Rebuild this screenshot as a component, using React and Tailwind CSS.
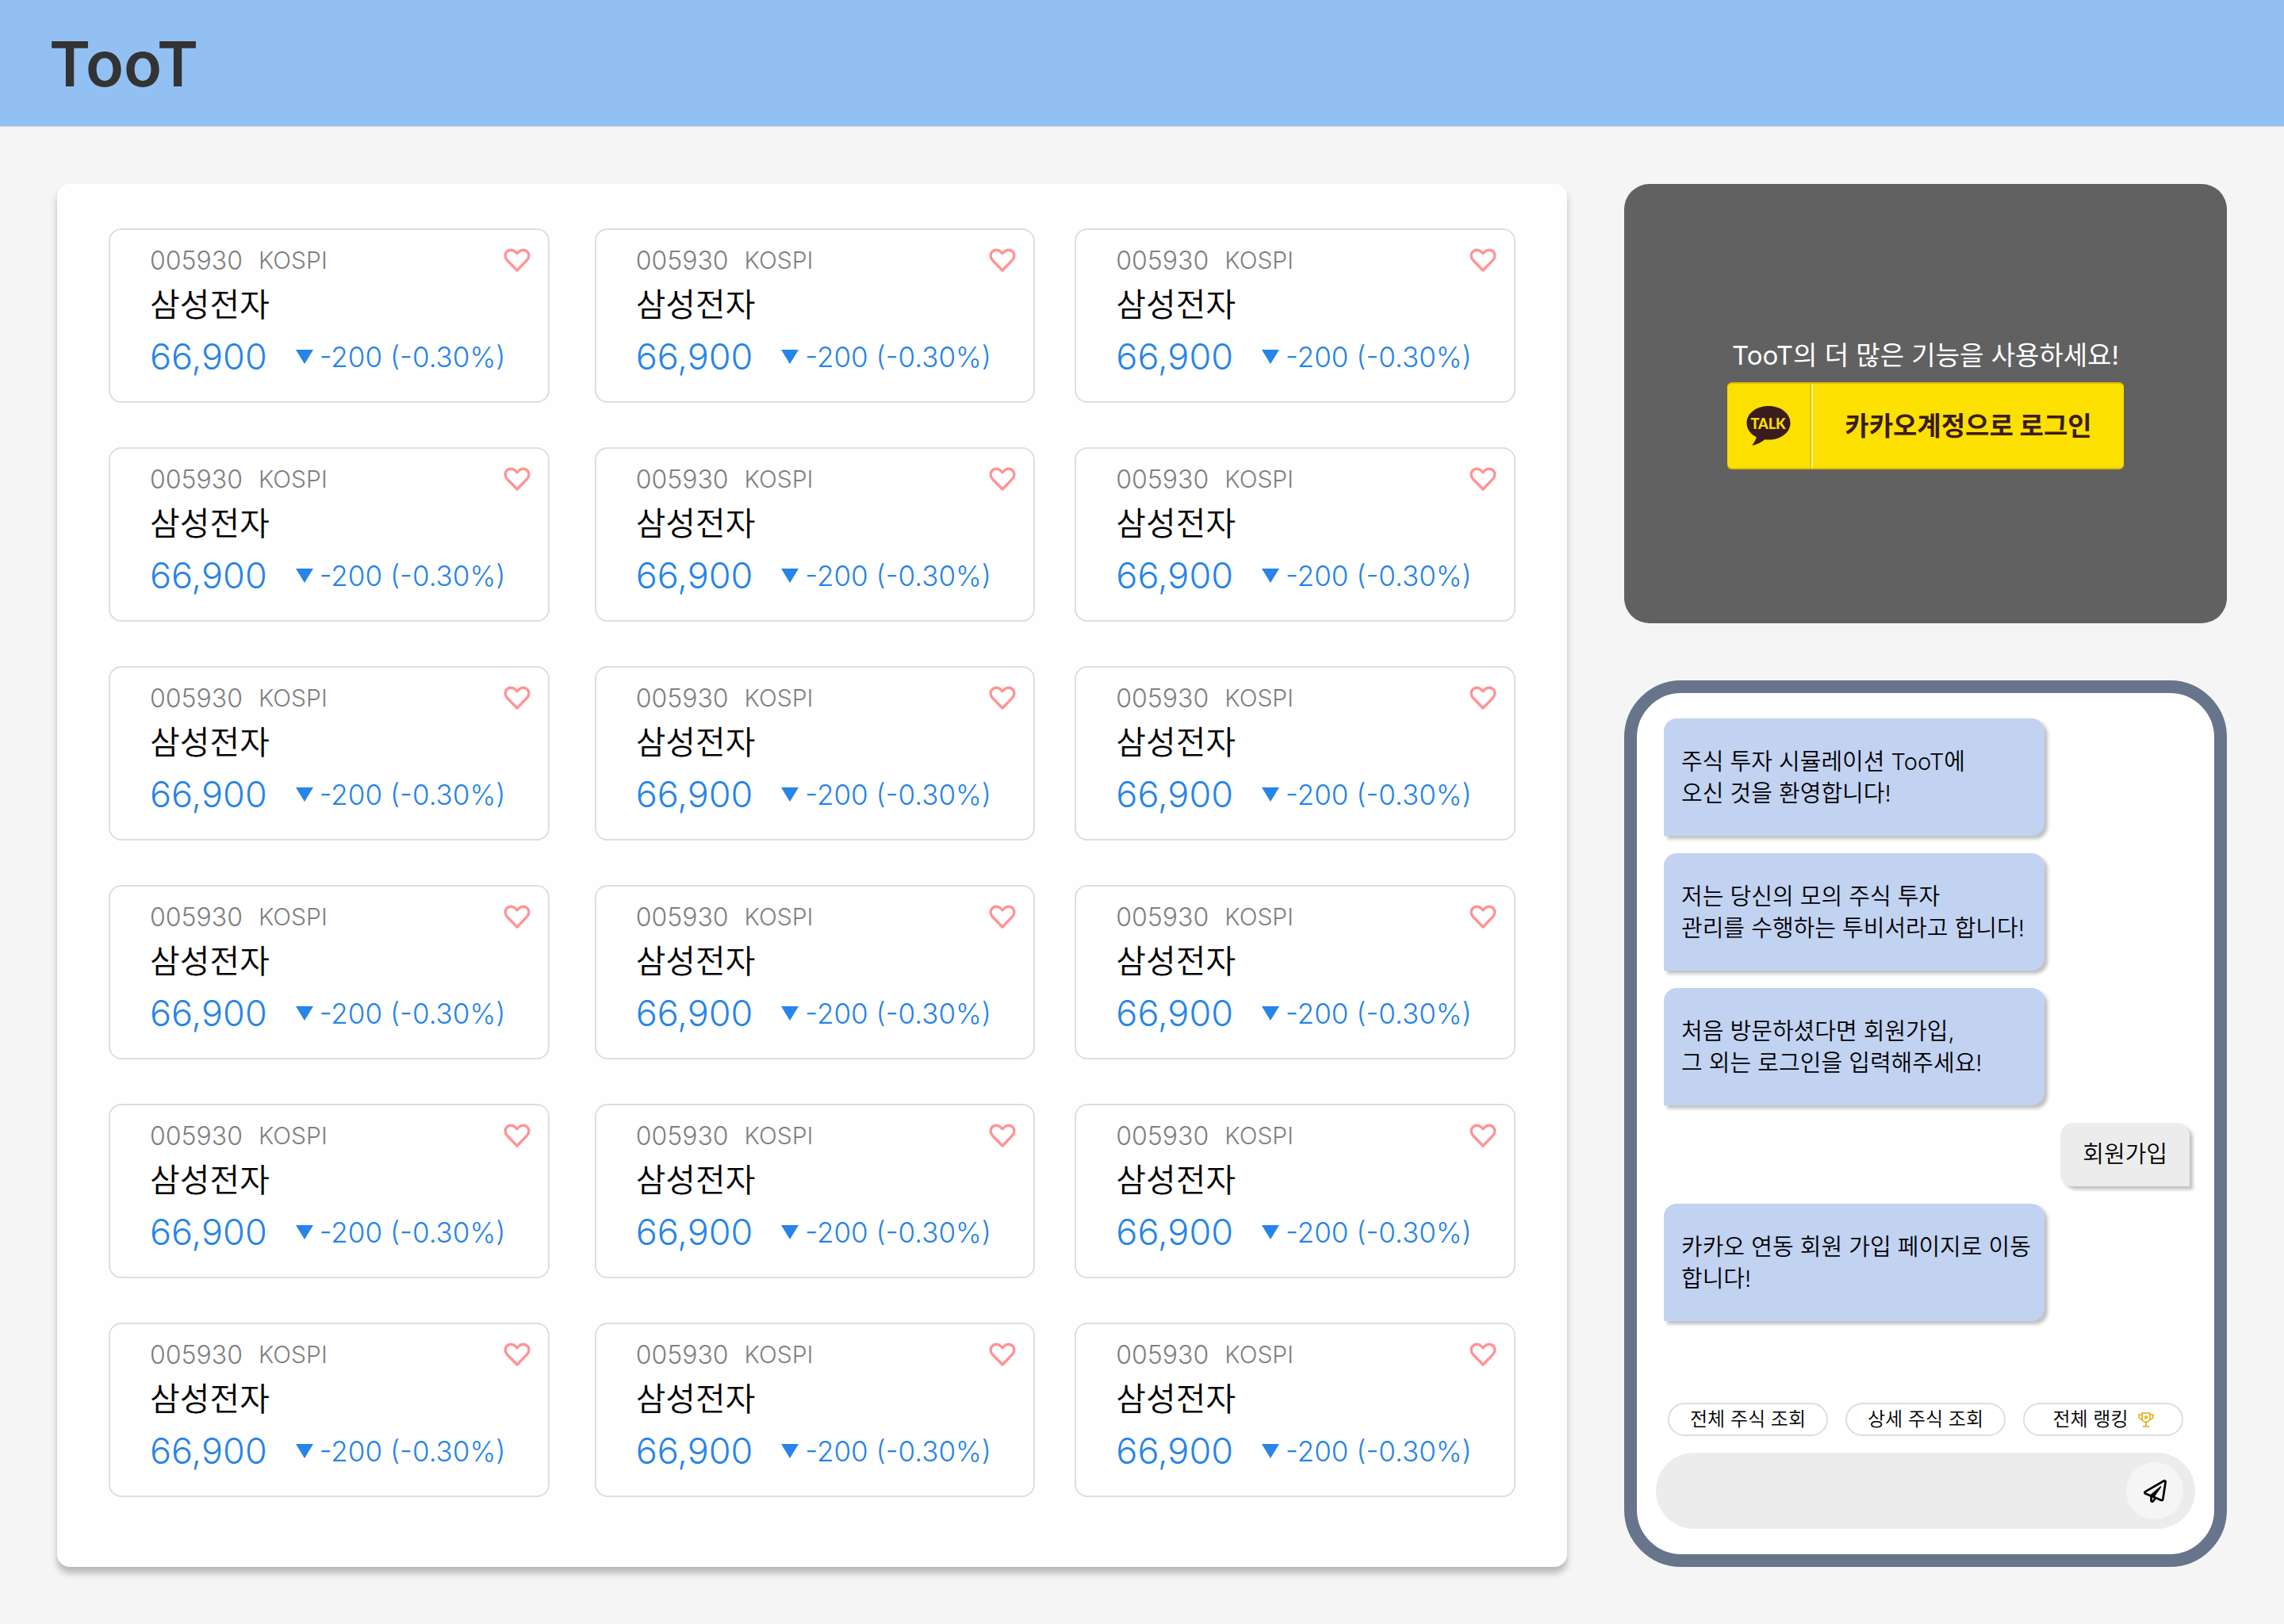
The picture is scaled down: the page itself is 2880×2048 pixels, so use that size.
import React from "react";
import { FaRegPaperPlane } from "react-icons/fa";

const stocks = Array.from({ length: 18 }, (_, i) => ({
  id: i,
  code: "005930",
  market: "KOSPI",
  name: "삼성전자",
  price: "66,900",
  change: "-200 (-0.30%)",
}));

const messages = [
  { from: "bot", lines: ["주식 투자 시뮬레이션 TooT에", "오신 것을 환영합니다!"] },
  { from: "bot", lines: ["저는 당신의 모의 주식 투자", "관리를 수행하는 투비서라고 합니다!"] },
  { from: "bot", lines: ["처음 방문하셨다면 회원가입,", "그 외는 로그인을 입력해주세요!"] },
  { from: "user", lines: ["회원가입"] },
  { from: "bot", lines: ["카카오 연동 회원 가입 페이지로 이동", "합니다!"] },
];

function Heart() {
  return (
    <svg viewBox="0 0 34 30" className="h-[30px] w-[34px]" fill="none" stroke="#ff9494" strokeWidth="3.4" strokeLinejoin="round" aria-hidden="true">
      <path d="M17 28 L4.6 15.2 C1.6 12 1.2 7 4.2 4.2 C7.2 1.4 11.8 1.6 14.6 4.4 L17 6.8 L19.4 4.4 C22.2 1.6 26.8 1.4 29.8 4.2 C32.8 7 32.4 12 29.4 15.2 Z" />
    </svg>
  );
}

function Trophy() {
  return (
    <svg viewBox="0 0 20 19" className="h-[19px] w-5" fill="none" stroke="#e9ae22" strokeWidth="1.7" aria-hidden="true">
      <path d="M5 1 H15 V7 C15 10 12.8 12.4 10 12.4 C7.2 12.4 5 10 5 7 Z" />
      <path d="M5 3 H1 V4.8 C1 7.8 3 9.2 6 9.6 M15 3 H19 V4.8 C19 7.8 17 9.2 14 9.6" />
      <path d="M10 12.4 V17.6 M5.8 17.8 H14.2" />
      <path d="M10 3 L11 5.2 L13.2 5.4 L11.5 6.9 L12 9.1 L10 8 L8 9.1 L8.5 6.9 L6.8 5.4 L9 5.2 Z" fill="#e9ae22" stroke="none" />
    </svg>
  );
}

function TalkLogo() {
  return (
    <svg viewBox="0 0 56 50" className="h-[50px] w-14" aria-hidden="true">
      <path d="M28 0 C12.6 0 0.5 9.4 0.5 21.4 C0.5 29 5.4 35.4 12.8 39.2 C12 42.6 9.8 46.6 7.2 49.6 C13.2 48.8 19.4 45.6 23.2 42.2 C24.8 42.5 26.4 42.6 28 42.6 C43.4 42.6 55.5 33.2 55.5 21.4 C55.5 9.4 43.4 0 28 0 Z" fill="#3b1c1e" />
      <text x="27.5" y="28.5" textAnchor="middle" fontFamily="Lato, sans-serif" fontWeight="900" fontSize="18" fill="#fbe000">TALK</text>
    </svg>
  );
}

function StockCard({ stock }) {
  return (
    <article className="relative w-full rounded-2xl border-2 border-[#dedede] bg-white px-[50px] pt-[14px] pb-5">
      <div className="flex items-start gap-5 text-[#808080] font-light">
        <span className="text-[32px] leading-[50px]">{stock.code}</span>
        <span className="text-[30px] leading-[48px]">{stock.market}</span>
      </div>
      <button type="button" aria-label="관심 종목" className="absolute top-[23px] right-[22px]">
        <Heart />
      </button>
      <h2 className="text-[41px] leading-[60px] font-[350] text-black">{stock.name}</h2>
      <div className="flex items-center text-[#2784e8] font-light">
        <span className="text-[45px] leading-[72px]">{stock.price}</span>
        <svg viewBox="0 0 22 18" className="ml-9 h-[18px] w-[22px]" aria-hidden="true">
          <path d="M0 0 H22 L11 18 Z" fill="#2784e8" />
        </svg>
        <span className="ml-2 text-[35px] leading-[72px] whitespace-nowrap">{stock.change}</span>
      </div>
    </article>
  );
}

function Message({ message }) {
  const text = message.lines.map((line) => (
    <span key={line} className="block whitespace-nowrap">{line}</span>
  ));
  if (message.from === "user") {
    return (
      <li className="self-end rounded-[16px] rounded-br-none bg-[#ececec] px-7 py-5 text-[29px] leading-[40px] font-[350] shadow-[4px_4px_4px_rgba(0,0,0,0.25)]">
        {text}
      </li>
    );
  }
  return (
    <li className="w-[480px] self-start rounded-[16px] rounded-bl-none bg-[#c2d2f1] px-[22px] pt-[35px] pb-[33px] text-[29px] leading-[40px] font-[350] shadow-[4px_4px_4px_rgba(0,0,0,0.25)]">
      {text}
    </li>
  );
}

function Chip({ children }) {
  return (
    <button type="button" className="flex h-[42px] flex-1 items-center justify-center gap-3 rounded-full border-2 border-[#dedede] bg-white text-[24px] leading-[38px] font-[350] whitespace-nowrap text-black">
      {children}
    </button>
  );
}

export default function App() {
  return (
    <div className="flex min-h-screen flex-col bg-[#f5f5f5] font-['Inter','Noto_Sans_CJK_KR',sans-serif] text-black">
      <header className="flex h-[160px] items-center border-b border-[#d9d9d9] bg-[#93c0f2] px-[62px]">
        <h1 className="text-[79px] leading-[100px] font-semibold text-[#333333]">
          <a href="#">TooT</a>
        </h1>
      </header>

      <main className="grid flex-1 grid-cols-[1904fr_760fr] gap-[72px] p-[72px]">
        <section aria-label="주식 목록" className="rounded-2xl bg-[#fefefe] px-[65px] pt-14 pb-[88px] shadow-[0_8px_8px_rgba(0,0,0,0.25)]">
          <ul className="grid grid-cols-[613fr_606fr_556fr] gap-y-14">
            {stocks.map((stock) => (
              <li key={stock.id} className="nth-[3n+1]:pr-[57px] nth-[3n+2]:pr-[50px]">
                <StockCard stock={stock} />
              </li>
            ))}
          </ul>
        </section>

        <div className="flex flex-col gap-[72px]">
          <section aria-label="로그인" className="flex h-[554px] flex-col items-center justify-center gap-2 rounded-[32px] bg-[#616161] pb-1">
            <p className="text-[33px] leading-[52px] text-white">TooT의 더 많은 기능을 사용하세요!</p>
            <button type="button" className="flex h-[110px] w-[500px] items-stretch rounded-[6px] border-y-2 border-[#e6b800] bg-[#fbe000] text-[#3b1c1e]">
              <span className="flex w-[106px] items-center justify-center border-r-2 border-[#f0c400]">
                <TalkLogo />
              </span>
              <span className="flex flex-1 items-center justify-center border-l-2 border-[#fff09a] text-[33px] leading-[48px] font-bold">
                카카오계정으로 로그인
              </span>
            </button>
          </section>

          <section aria-label="투비서 채팅" className="flex flex-1 flex-col rounded-[72px] border-[16px] border-[#68748c] bg-white px-6 py-8">
            <ul className="flex flex-1 flex-col gap-[22px] pr-[7px] pl-[10px]">
              {messages.map((message) => (
                <Message key={message.lines[0]} message={message} />
              ))}
            </ul>
            <div className="flex gap-[22px] px-[15px] pb-[21px]">
              <Chip>전체 주식 조회</Chip>
              <Chip>상세 주식 조회</Chip>
              <Chip>
                전체 랭킹 <Trophy />
              </Chip>
            </div>
            <form className="flex h-24 items-center rounded-full bg-[#ececec] pr-[15px] pl-10" onSubmit={(e) => e.preventDefault()}>
              <input type="text" aria-label="메시지 입력" className="h-full min-w-0 flex-1 bg-transparent text-[29px] outline-none" />
              <button type="submit" aria-label="보내기" className="flex size-[72px] items-center justify-center rounded-full bg-[#f5f5f5]">
                <FaRegPaperPlane className="size-[29px]" />
              </button>
            </form>
          </section>
        </div>
      </main>
    </div>
  );
}
